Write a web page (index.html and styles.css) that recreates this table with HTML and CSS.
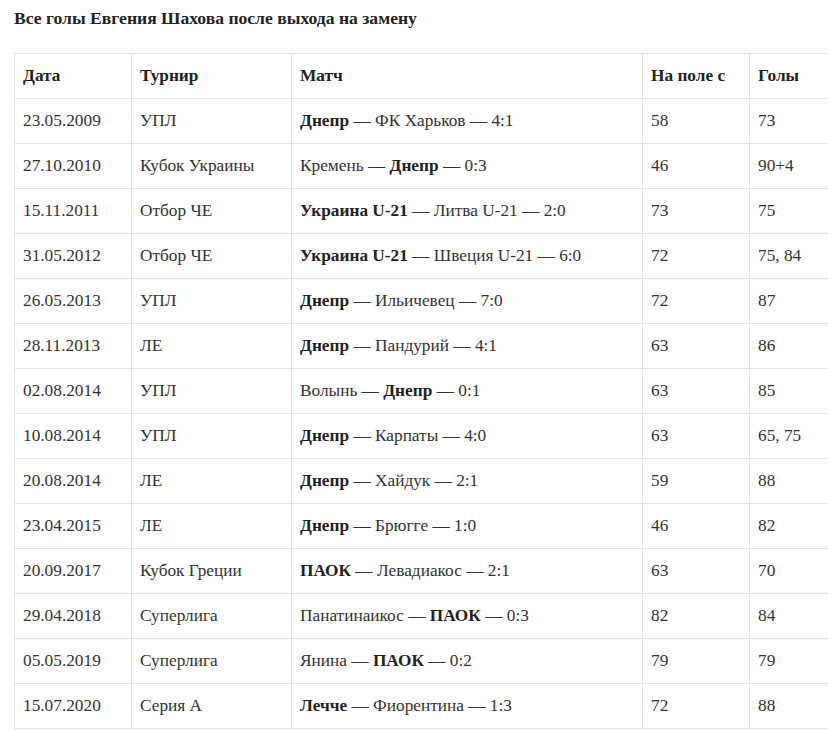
FILE: index.html
```html
<!DOCTYPE html>
<html lang="ru">
<head>
<meta charset="utf-8">
<link rel="stylesheet" href="styles.css">
</head>
<body>
<div class="page">
  <h3 class="title">Все голы Евгения Шахова после выхода на замену</h3>
  <div class="table-wrap">
    <table class="goals">
      <colgroup>
        <col class="c-date"><col class="c-tour"><col class="c-match"><col class="c-min"><col class="c-goals">
      </colgroup>
      <thead>
        <tr><th>Дата</th><th>Турнир</th><th>Матч</th><th>На поле с</th><th>Голы</th></tr>
      </thead>
      <tbody>
        <tr><td>23.05.2009</td><td>УПЛ</td><td><b>Днепр</b> — ФК Харьков — 4:1</td><td>58</td><td>73</td></tr>
        <tr><td>27.10.2010</td><td>Кубок Украины</td><td>Кремень — <b>Днепр</b> — 0:3</td><td>46</td><td>90+4</td></tr>
        <tr><td>15.11.2011</td><td>Отбор ЧЕ</td><td><b>Украина U-21</b> — Литва U-21 — 2:0</td><td>73</td><td>75</td></tr>
        <tr><td>31.05.2012</td><td>Отбор ЧЕ</td><td><b>Украина U-21</b> — Швеция U-21 — 6:0</td><td>72</td><td>75, 84</td></tr>
        <tr><td>26.05.2013</td><td>УПЛ</td><td><b>Днепр</b> — Ильичевец — 7:0</td><td>72</td><td>87</td></tr>
        <tr><td>28.11.2013</td><td>ЛЕ</td><td><b>Днепр</b> — Пандурий — 4:1</td><td>63</td><td>86</td></tr>
        <tr><td>02.08.2014</td><td>УПЛ</td><td>Волынь — <b>Днепр</b> — 0:1</td><td>63</td><td>85</td></tr>
        <tr><td>10.08.2014</td><td>УПЛ</td><td><b>Днепр</b> — Карпаты — 4:0</td><td>63</td><td>65, 75</td></tr>
        <tr><td>20.08.2014</td><td>ЛЕ</td><td><b>Днепр</b> — Хайдук — 2:1</td><td>59</td><td>88</td></tr>
        <tr><td>23.04.2015</td><td>ЛЕ</td><td><b>Днепр</b> — Брюгге — 1:0</td><td>46</td><td>82</td></tr>
        <tr><td>20.09.2017</td><td>Кубок Греции</td><td><b>ПАОК</b> — Левадиакос — 2:1</td><td>63</td><td>70</td></tr>
        <tr><td>29.04.2018</td><td>Суперлига</td><td>Панатинаикос — <b>ПАОК</b> — 0:3</td><td>82</td><td>84</td></tr>
        <tr><td>05.05.2019</td><td>Суперлига</td><td>Янина — <b>ПАОК</b> — 0:2</td><td>79</td><td>79</td></tr>
        <tr><td>15.07.2020</td><td>Серия А</td><td><b>Лечче</b> — Фиорентина — 1:3</td><td>72</td><td>88</td></tr>
      </tbody>
    </table>
  </div>
</div>
</body>
</html>
```

FILE: styles.css
```css
html, body {
  margin: 0;
  padding: 0;
  overflow: hidden;
  background: #fff;
}
.page {
  padding: 0 0 0 14px;
  font-family: "Liberation Serif", "Times New Roman", serif;
  color: #333;
}
.title {
  margin: 0;
  padding-top: 8px;
  font-size: 17.6px;
  line-height: 20px;
  font-weight: bold;
  color: #222;
}
.table-wrap {
  margin-top: 25px;
  overflow: hidden;
  width: 814px;
}
.goals {
  border-collapse: collapse;
  table-layout: fixed;
  width: 850px;
  font-size: 17.3px;
  line-height: 20px;
}
.c-date { width: 117px; }
.c-tour { width: 160px; }
.c-match { width: 351px; }
.c-min { width: 107px; }
.c-goals { width: 115px; }
.goals th, .goals td {
  border: 1px solid #e1e1e1;
  padding: 12px 8px;
  text-align: left;
  vertical-align: middle;
  white-space: nowrap;
}
.goals th {
  font-weight: bold;
  color: #222;
}
.goals b {
  color: #222;
}
```
